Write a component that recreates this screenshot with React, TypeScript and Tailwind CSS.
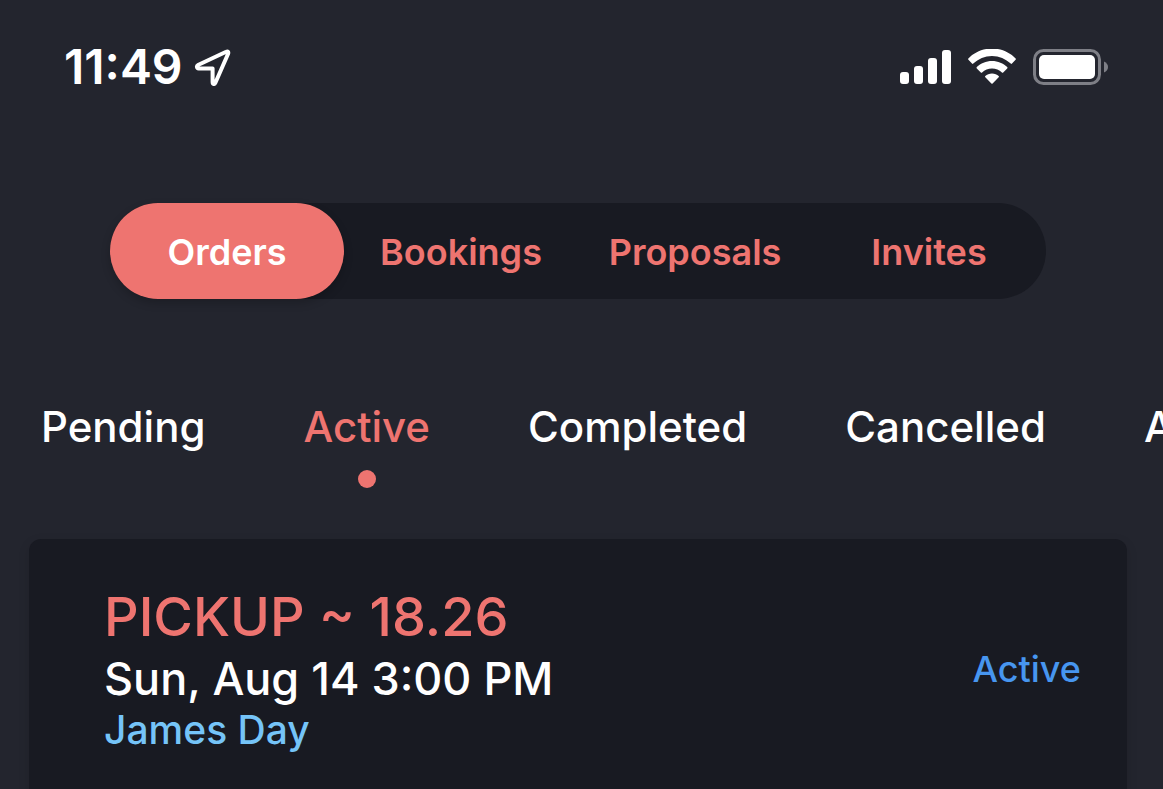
import React, { useState } from 'react';
import clsx from 'clsx';

const SECTIONS = ['Orders', 'Bookings', 'Proposals', 'Invites'];
const FILTERS = ['Pending', 'Active', 'Completed', 'Cancelled', 'All'];

const StatusBar: React.FC = () => (
  <header className="flex items-center justify-between h-[134px] pl-16 pr-[54px]">
    <div className="flex items-center gap-2.5">
      <span className="text-[48px] leading-[56px] font-semibold">11:49</span>
      <svg width="38" height="38" viewBox="0 0 38 38" fill="none" stroke="currentColor" strokeWidth="4" strokeLinejoin="round">
        <path d="M33.2 3.8 L5 17 C3.4 17.8 3.6 20.4 5.6 20.4 L19.6 20.4 L19.6 34 C19.6 36.4 21.6 36.6 22.4 34.8 L35 6 C35.8 4 34.8 3 33.2 3.8 Z" />
      </svg>
    </div>

    <div className="flex items-center gap-4">
      {/* Signal */}
      <svg width="51" height="36" viewBox="0 0 51 36" fill="currentColor">
        <rect x="0" y="23" width="9" height="12" rx="3" />
        <rect x="14" y="17" width="9" height="18" rx="3" />
        <rect x="28" y="9" width="9" height="26" rx="3" />
        <rect x="42" y="1" width="9" height="34" rx="3" />
      </svg>
      {/* Wifi */}
      <svg width="50" height="36" viewBox="0 0 50 36" fill="currentColor">
        <path d="M25 -0.5 C34.4 -0.5 42.8 3.4 48.6 9.4 Q49.3 10.1 48.6 10.8 L45 14.6 Q44.4 15.2 43.7 14.6 C38.7 9.9 32.2 7 25 7 C17.8 7 11.3 9.9 6.3 14.6 Q5.6 15.2 5 14.6 L1.4 10.8 Q0.7 10.1 1.4 9.4 C7.2 3.4 15.6 -0.5 25 -0.5 Z" />
        <path d="M25 12 C31 12 36.3 14.4 40.2 18.1 Q40.9 18.8 40.2 19.5 L36.2 23.4 Q35.6 24 34.9 23.4 C32.3 21 28.8 19.5 25 19.5 C21.2 19.5 17.7 21 15.1 23.4 Q14.4 24 13.8 23.4 L9.8 19.5 Q9.1 18.8 9.8 18.1 C13.7 14.4 19 12 25 12 Z" />
        <path d="M25 24.5 C27.7 24.5 30 25.4 31.7 27 Q32.3 27.6 31.7 28.2 L25.6 34.4 Q25 35 24.4 34.4 L18.3 28.2 Q17.7 27.6 18.3 27 C20 25.4 22.3 24.5 25 24.5 Z" />
      </svg>
      {/* Battery */}
      <svg width="76" height="36" viewBox="0 0 76 36">
        <rect x="1.5" y="1.5" width="65" height="33" rx="9" fill="none" stroke="#7e7f86" strokeWidth="3" />
        <rect x="6" y="6" width="56" height="24" rx="5" fill="#fff" />
        <path d="M71 12.5 Q75 14.5 75 18 Q75 21.5 71 23.5 Z" fill="#7e7f86" />
      </svg>
    </div>
  </header>
);

const OrderCard: React.FC = () => (
  <article className="flex flex-1 items-start justify-between pl-[75px] pr-[46px] pt-11 pb-16 rounded-t-xl bg-[#181a22] shadow-[0_4px_12px_rgba(0,0,0,0.12)]">
    <div className="font-medium">
      <h2 className="text-[54px] leading-[67px] text-[#ee7470]">PICKUP ~ 18.26</h2>
      <p className="text-[45px] leading-[58px]">Sun, Aug 14 3:00 PM</p>
      <p className="text-[39px] leading-[44px] text-[#75c4f8]">James Day</p>
    </div>
    <span className="mt-16 text-[36px] leading-[44px] font-medium text-[#4796f0]">Active</span>
  </article>
);

const App: React.FC = () => {
  const [section, setSection] = useState('Orders');
  const [filter, setFilter] = useState('Active');

  return (
    <div className="flex flex-col min-h-screen overflow-hidden bg-[#23252e] text-white font-['Inter',sans-serif]">
      <StatusBar />

      <nav className="grid grid-cols-4 h-24 mt-[69px] ml-[110px] mr-[117px] rounded-full bg-[#181a22]">
        {SECTIONS.map((name) => (
          <button
            key={name}
            onClick={() => setSection(name)}
            className={clsx(
              'rounded-full pt-0.5 text-[36px] leading-[48px] font-semibold',
              name === section ? 'bg-[#ee7470] text-white shadow-[0_4px_10px_rgba(0,0,0,0.2)]' : 'text-[#ee7470]'
            )}
          >
            {name}
          </button>
        ))}
      </nav>

      <nav className="flex items-start gap-[98px] h-[138px] mt-[102px] pl-[41px] overflow-hidden">
        {FILTERS.map((name) => (
          <button
            key={name}
            onClick={() => setFilter(name)}
            className={clsx(
              'flex flex-col items-center shrink-0 gap-[17px] text-[42px] leading-[52px] font-medium',
              name === filter && 'text-[#ee7470]'
            )}
          >
            {name}
            {name === filter && <span className="size-[18px] rounded-full bg-[#ee7470]" />}
          </button>
        ))}
      </nav>

      <main className="flex flex-col flex-1 pl-[29px] pr-9">
        <OrderCard />
      </main>
    </div>
  );
};

export default App;
